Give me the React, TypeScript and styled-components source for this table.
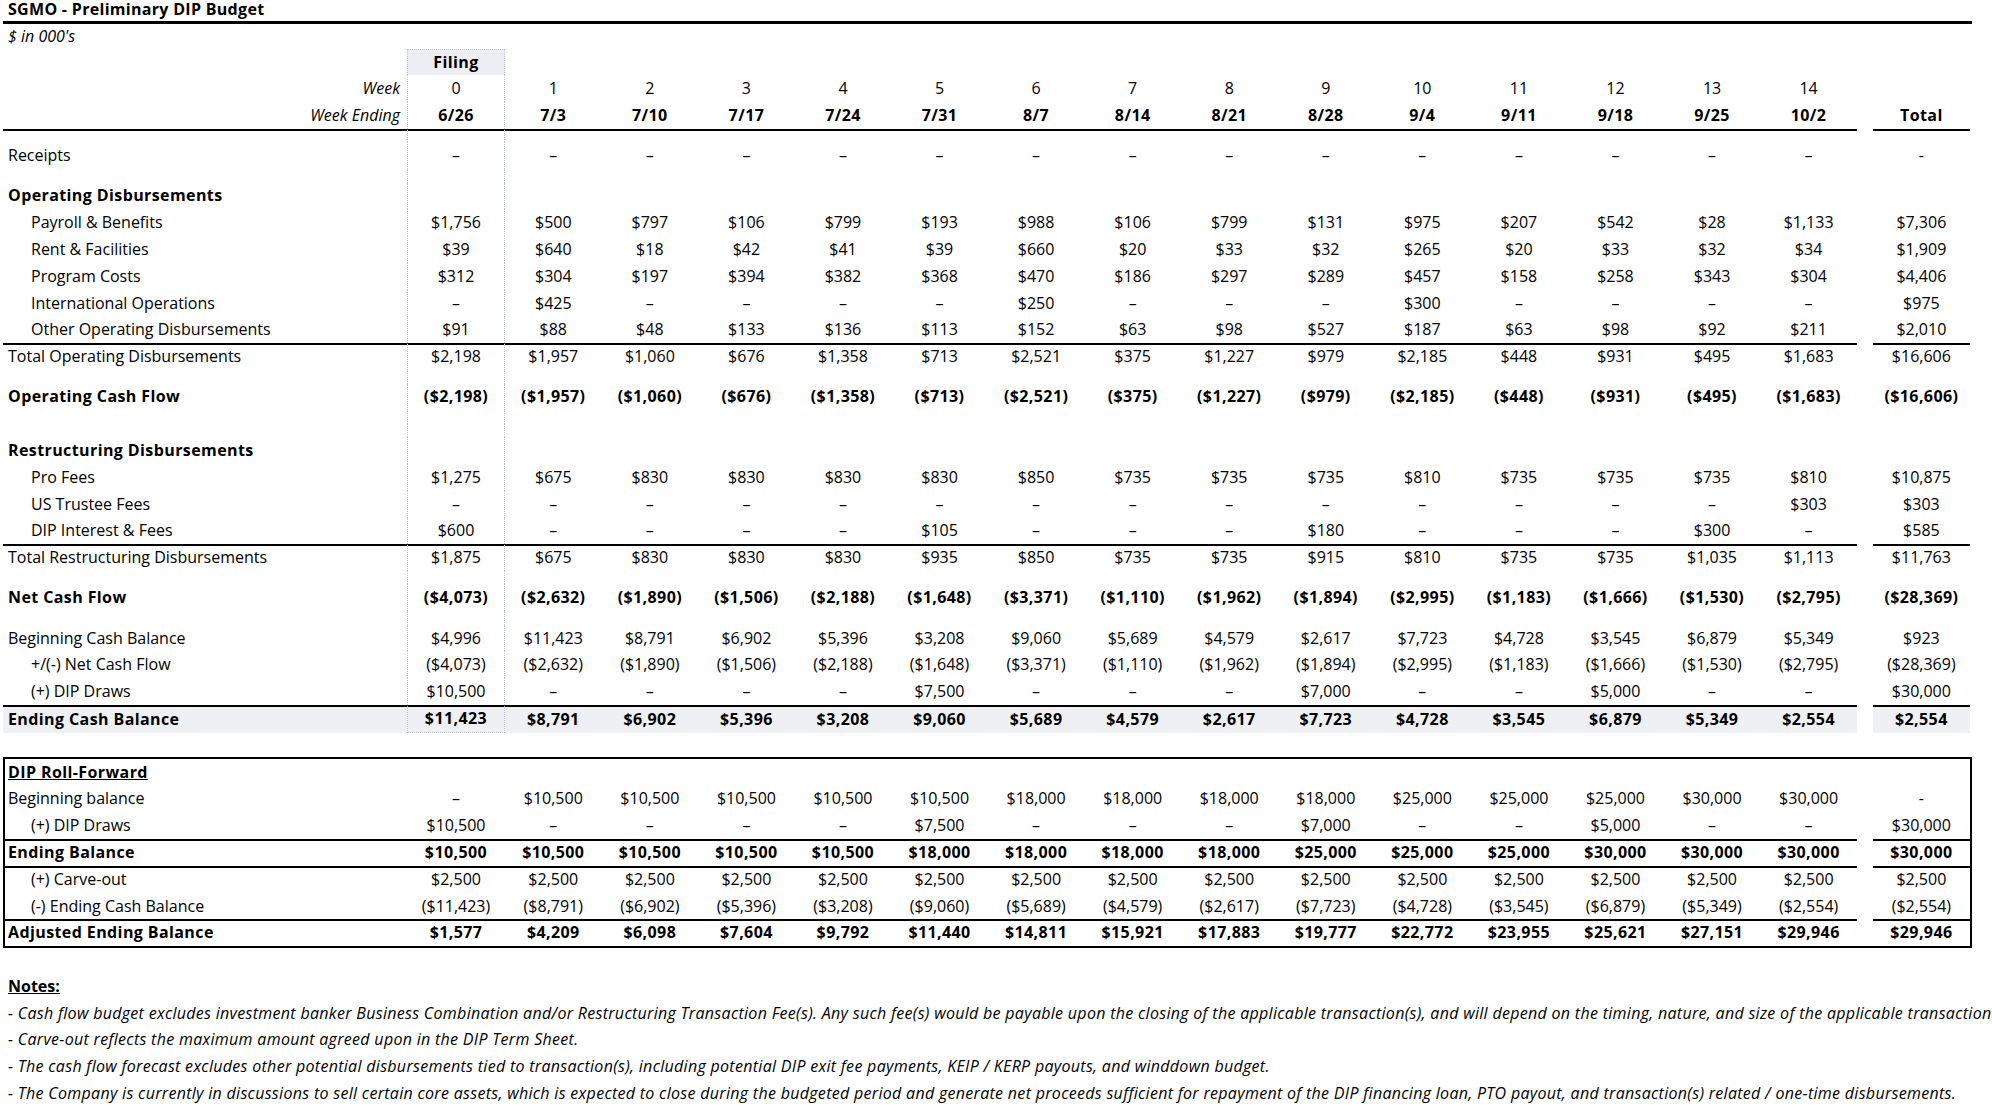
import React from 'react';
import styled, { createGlobalStyle, css } from 'styled-components';

const GlobalStyle = createGlobalStyle`
  html, body {
    margin: 0;
    padding: 0;
    overflow: hidden;
    background: #ffffff;
  }
  body {
    font-family: 'Open Sans', 'Noto Sans', 'Liberation Sans', sans-serif;
    font-size: 16px;
    color: #000000;
  }
`;

const ROW = 26.8;
const dotted = '1px dotted #bfc3cd';
const cols = (label: number) => `${label}px 98px repeat(14, 96.57px) 16px 97px`;

type Edge = 'top' | 'mid' | 'bottom';

const Page = styled.div`
  padding-left: 3px;
  width: 1969px;
`;

const Title = styled.div`
  box-sizing: border-box;
  height: 24px;
  padding: 0 0 0 5px;
  border-bottom: 3px solid #000;
  font-weight: 700;
  letter-spacing: 0.3px;
  line-height: 19px;
`;

const Units = styled.div`
  height: 24.6px;
  padding-left: 5px;
  display: flex;
  align-items: center;
  font-style: italic;
`;

const Row = styled.div<{ $boxed?: boolean; $half?: boolean }>`
  display: grid;
  grid-template-columns: ${(p) => cols(p.$boxed ? 402 : 404)};
  height: ${(p) => (p.$half ? ROW / 2 : ROW)}px;
`;

const Cell = styled.div<{ $line?: boolean; $shade?: boolean; $bold?: boolean }>`
  box-sizing: border-box;
  display: flex;
  align-items: center;
  padding-bottom: ${(p) => (p.$line ? 3 : 1)}px;
  white-space: nowrap;
  font-weight: ${(p) => (p.$bold ? 700 : 400)};
  letter-spacing: ${(p) => (p.$bold ? '0.4px' : '0')};
  background: ${(p) => (p.$shade ? '#eef0f4' : 'transparent')};
  border-top: ${(p) => (p.$line ? '2px solid #000' : '0')};
`;

const Label = styled(Cell)<{ $indent?: boolean; $boxed?: boolean; $right?: boolean; $italic?: boolean; $underline?: boolean }>`
  justify-content: ${(p) => (p.$right ? 'flex-end' : 'flex-start')};
  padding-left: ${(p) => (p.$indent ? 28 : 5) - (p.$boxed ? 2 : 0)}px;
  padding-right: 7px;
  font-style: ${(p) => (p.$italic ? 'italic' : 'normal')};
  text-decoration: ${(p) => (p.$underline ? 'underline' : 'none')};
`;

const Value = styled(Cell)<{ $filing?: Edge; $tint?: boolean }>`
  justify-content: center;
  ${(p) =>
    p.$filing &&
    css`
      border-left: ${dotted};
      border-right: ${dotted};
    `}
  ${(p) => p.$filing === 'top' && css`border-top: ${dotted};`}
  ${(p) => p.$filing === 'bottom' && css`border-bottom: ${dotted};`}
  ${(p) => p.$tint && css`background: #eceef3;`}
`;

const Gap = styled.div``;

const Box = styled.div`
  margin-top: 24.8px;
  border: 2px solid #000;
  box-sizing: border-box;
  width: 1969px;
`;

const Notes = styled.div`
  margin-top: 24.2px;
  padding-left: 5px;
`;

const NotesHead = styled.div`
  height: ${ROW}px;
  display: flex;
  align-items: center;
  font-weight: 700;
  text-decoration: underline;
`;

const Note = styled.div`
  height: ${ROW}px;
  display: flex;
  align-items: center;
  font-style: italic;
  letter-spacing: 0.3px;
  white-space: nowrap;
`;

type Spec = {
  label?: string;
  vals?: string;
  total?: string;
  head?: boolean;
  bold?: boolean;
  indent?: boolean;
  line?: boolean;
  shade?: boolean;
  half?: boolean;
  underline?: boolean;
};

const split = (s?: string) =>
  s ? s.split(' ').map((x) => (x === '-' ? '–' : x)) : Array.from({ length: 15 }, () => '');

const budget: Spec[] = [
  { half: true, line: true },
  { label: 'Receipts', vals: '- - - - - - - - - - - - - - -', total: '-' },
  { half: true },
  { label: 'Operating Disbursements', head: true },
  { label: 'Payroll & Benefits', indent: true, vals: '$1,756 $500 $797 $106 $799 $193 $988 $106 $799 $131 $975 $207 $542 $28 $1,133', total: '$7,306' },
  { label: 'Rent & Facilities', indent: true, vals: '$39 $640 $18 $42 $41 $39 $660 $20 $33 $32 $265 $20 $33 $32 $34', total: '$1,909' },
  { label: 'Program Costs', indent: true, vals: '$312 $304 $197 $394 $382 $368 $470 $186 $297 $289 $457 $158 $258 $343 $304', total: '$4,406' },
  { label: 'International Operations', indent: true, vals: '- $425 - - - - $250 - - - $300 - - - -', total: '$975' },
  { label: 'Other Operating Disbursements', indent: true, vals: '$91 $88 $48 $133 $136 $113 $152 $63 $98 $527 $187 $63 $98 $92 $211', total: '$2,010' },
  { label: 'Total Operating Disbursements', line: true, vals: '$2,198 $1,957 $1,060 $676 $1,358 $713 $2,521 $375 $1,227 $979 $2,185 $448 $931 $495 $1,683', total: '$16,606' },
  { half: true },
  { label: 'Operating Cash Flow', bold: true, vals: '($2,198) ($1,957) ($1,060) ($676) ($1,358) ($713) ($2,521) ($375) ($1,227) ($979) ($2,185) ($448) ($931) ($495) ($1,683)', total: '($16,606)' },
  { half: true },
  { half: true },
  { label: 'Restructuring Disbursements', head: true },
  { label: 'Pro Fees', indent: true, vals: '$1,275 $675 $830 $830 $830 $830 $850 $735 $735 $735 $810 $735 $735 $735 $810', total: '$10,875' },
  { label: 'US Trustee Fees', indent: true, vals: '- - - - - - - - - - - - - - $303', total: '$303' },
  { label: 'DIP Interest & Fees', indent: true, vals: '$600 - - - - $105 - - - $180 - - - $300 -', total: '$585' },
  { label: 'Total Restructuring Disbursements', line: true, vals: '$1,875 $675 $830 $830 $830 $935 $850 $735 $735 $915 $810 $735 $735 $1,035 $1,113', total: '$11,763' },
  { half: true },
  { label: 'Net Cash Flow', bold: true, vals: '($4,073) ($2,632) ($1,890) ($1,506) ($2,188) ($1,648) ($3,371) ($1,110) ($1,962) ($1,894) ($2,995) ($1,183) ($1,666) ($1,530) ($2,795)', total: '($28,369)' },
  { half: true },
  { label: 'Beginning Cash Balance', vals: '$4,996 $11,423 $8,791 $6,902 $5,396 $3,208 $9,060 $5,689 $4,579 $2,617 $7,723 $4,728 $3,545 $6,879 $5,349', total: '$923' },
  { label: '+/(-) Net Cash Flow', indent: true, vals: '($4,073) ($2,632) ($1,890) ($1,506) ($2,188) ($1,648) ($3,371) ($1,110) ($1,962) ($1,894) ($2,995) ($1,183) ($1,666) ($1,530) ($2,795)', total: '($28,369)' },
  { label: '(+) DIP Draws', indent: true, vals: '$10,500 - - - - $7,500 - - - $7,000 - - $5,000 - -', total: '$30,000' },
  { label: 'Ending Cash Balance', bold: true, line: true, shade: true, vals: '$11,423 $8,791 $6,902 $5,396 $3,208 $9,060 $5,689 $4,579 $2,617 $7,723 $4,728 $3,545 $6,879 $5,349 $2,554', total: '$2,554' },
];

const rollForward: Spec[] = [
  { label: 'DIP Roll-Forward', head: true, underline: true },
  { label: 'Beginning balance', vals: '- $10,500 $10,500 $10,500 $10,500 $10,500 $18,000 $18,000 $18,000 $18,000 $25,000 $25,000 $25,000 $30,000 $30,000', total: '-' },
  { label: '(+) DIP Draws', indent: true, vals: '$10,500 - - - - $7,500 - - - $7,000 - - $5,000 - -', total: '$30,000' },
  { label: 'Ending Balance', bold: true, line: true, vals: '$10,500 $10,500 $10,500 $10,500 $10,500 $18,000 $18,000 $18,000 $18,000 $25,000 $25,000 $25,000 $30,000 $30,000 $30,000', total: '$30,000' },
  { label: '(+) Carve-out', indent: true, line: true, vals: '$2,500 $2,500 $2,500 $2,500 $2,500 $2,500 $2,500 $2,500 $2,500 $2,500 $2,500 $2,500 $2,500 $2,500 $2,500', total: '$2,500' },
  { label: '(-) Ending Cash Balance', indent: true, vals: '($11,423) ($8,791) ($6,902) ($5,396) ($3,208) ($9,060) ($5,689) ($4,579) ($2,617) ($7,723) ($4,728) ($3,545) ($6,879) ($5,349) ($2,554)', total: '($2,554)' },
  { label: 'Adjusted Ending Balance', bold: true, line: true, vals: '$1,577 $4,209 $6,098 $7,604 $9,792 $11,440 $14,811 $15,921 $17,883 $19,777 $22,772 $23,955 $25,621 $27,151 $29,946', total: '$29,946' },
];

const notes = [
  '- Cash flow budget excludes investment banker Business Combination and/or Restructuring Transaction Fee(s). Any such fee(s) would be payable upon the closing of the applicable transaction(s), and will depend on the timing, nature, and size of the applicable transaction(s).',
  '- Carve-out reflects the maximum amount agreed upon in the DIP Term Sheet.',
  '- The cash flow forecast excludes other potential disbursements tied to transaction(s), including potential DIP exit fee payments, KEIP / KERP payouts, and winddown budget.',
  '- The Company is currently in discussions to sell certain core assets, which is expected to close during the budgeted period and generate net proceeds sufficient for repayment of the DIP financing loan, PTO payout, and transaction(s) related / one-time disbursements.',
];

const WEEKS = '0 1 2 3 4 5 6 7 8 9 10 11 12 13 14';
const DATES = '6/26 7/3 7/10 7/17 7/24 7/31 8/7 8/14 8/21 8/28 9/4 9/11 9/18 9/25 10/2';

const BudgetRow = ({ spec, filing, boxed }: { spec: Spec; filing?: Edge; boxed?: boolean }) => {
  const { label, vals, total, head, bold, indent, line, shade, half, underline } = spec;
  return (
    <Row $boxed={boxed} $half={half}>
      <Label
        $line={line}
        $shade={shade}
        $bold={bold || head}
        $indent={indent}
        $boxed={boxed}
        $underline={underline}
      >
        {label}
      </Label>
      {split(vals).map((v, i) => (
        <Value key={i} $line={line} $shade={shade} $bold={bold} $filing={i === 0 ? filing : undefined}>
          {v}
        </Value>
      ))}
      <Gap />
      <Value $line={line} $shade={shade} $bold={bold}>
        {total}
      </Value>
    </Row>
  );
};

const Header = () => (
  <>
    <Row>
      <Label />
      {split().map((_, i) =>
        i === 0 ? (
          <Value key={i} $bold $tint $filing="top">
            Filing
          </Value>
        ) : (
          <Value key={i} />
        ),
      )}
      <Gap />
      <Value />
    </Row>
    <Row>
      <Label $right $italic>
        Week
      </Label>
      {split(WEEKS).map((w, i) => (
        <Value key={i} $filing={i === 0 ? 'mid' : undefined}>
          {w}
        </Value>
      ))}
      <Gap />
      <Value />
    </Row>
    <Row>
      <Label $right $italic>
        Week Ending
      </Label>
      {split(DATES).map((d, i) => (
        <Value key={i} $bold $filing={i === 0 ? 'mid' : undefined}>
          {d}
        </Value>
      ))}
      <Gap />
      <Value $bold>Total</Value>
    </Row>
  </>
);

export default function App() {
  return (
    <Page>
      <GlobalStyle />
      <Title>SGMO - Preliminary DIP Budget</Title>
      <Units>$ in 000's</Units>
      <Header />
      {budget.map((s, i) => (
        <BudgetRow key={i} spec={s} filing={i === budget.length - 1 ? 'bottom' : 'mid'} />
      ))}
      <Box>
        {rollForward.map((s, i) => (
          <BudgetRow key={i} spec={s} boxed />
        ))}
      </Box>
      <Notes>
        <NotesHead>Notes:</NotesHead>
        {notes.map((n, i) => (
          <Note key={i}>{n}</Note>
        ))}
      </Notes>
    </Page>
  );
}
